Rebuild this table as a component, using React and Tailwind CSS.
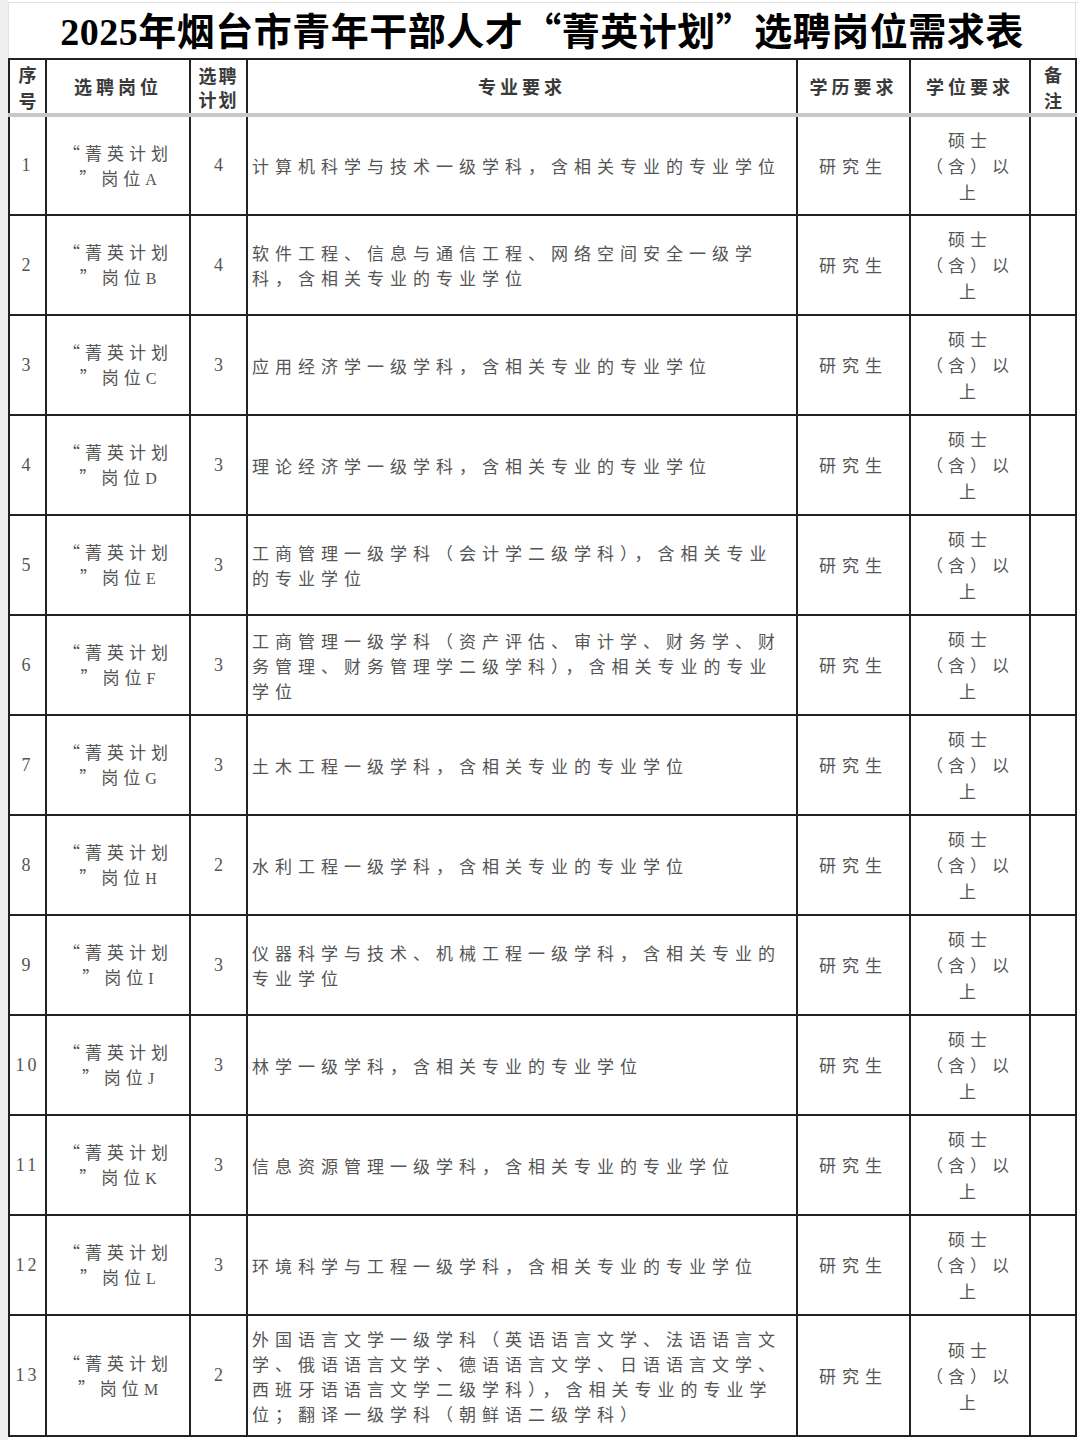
import React from "react";

const CJK = { fontFamily: '"Noto Sans CJK SC", "Liberation Sans", sans-serif' };
const SERIF = { fontFamily: '"Liberation Serif", "Noto Sans CJK SC", serif' };

// 岗位数据
const rows = [
  { n: 1, pos: "A", plan: 4, major: ["计算机科学与技术一级学科，含相关专业的专业学位"] },
  { n: 2, pos: "B", plan: 4, major: ["软件工程、信息与通信工程、网络空间安全一级学", "科，含相关专业的专业学位"] },
  { n: 3, pos: "C", plan: 3, major: ["应用经济学一级学科，含相关专业的专业学位"] },
  { n: 4, pos: "D", plan: 3, major: ["理论经济学一级学科，含相关专业的专业学位"] },
  { n: 5, pos: "E", plan: 3, major: ["工商管理一级学科（会计学二级学科），含相关专业", "的专业学位"] },
  {
    n: 6,
    pos: "F",
    plan: 3,
    major: ["工商管理一级学科（资产评估、审计学、财务学、财", "务管理、财务管理学二级学科），含相关专业的专业", "学位"],
  },
  { n: 7, pos: "G", plan: 3, major: ["土木工程一级学科，含相关专业的专业学位"] },
  { n: 8, pos: "H", plan: 2, major: ["水利工程一级学科，含相关专业的专业学位"] },
  { n: 9, pos: "I", plan: 3, major: ["仪器科学与技术、机械工程一级学科，含相关专业的", "专业学位"] },
  { n: 10, pos: "J", plan: 3, major: ["林学一级学科，含相关专业的专业学位"] },
  { n: 11, pos: "K", plan: 3, major: ["信息资源管理一级学科，含相关专业的专业学位"] },
  { n: 12, pos: "L", plan: 3, major: ["环境科学与工程一级学科，含相关专业的专业学位"] },
  {
    n: 13,
    pos: "M",
    plan: 2,
    tall: true,
    major: [
      "外国语言文学一级学科（英语语言文学、法语语言文",
      "学、俄语语言文学、德语语言文学、日语语言文学、",
      "西班牙语语言文学二级学科），含相关专业的专业学",
      "位；翻译一级学科（朝鲜语二级学科）",
    ],
  },
];

const cell = "border-2 border-[#222] align-middle p-0";
const head = cell + " border-b-[4px] border-b-[#c8c8c8]";

function Row({ r }) {
  return (
    <tr className={r.tall ? "h-[121px]" : "h-[100px]"}>
      <td className={cell + " text-center text-[18px] tracking-[3px] text-[#555]"} style={SERIF}>
        {r.n}
      </td>
      <td className={cell + " text-center text-[17px] leading-[25px] tracking-[5px] text-[#555]"} style={CJK}>
        <div>“菁英计划</div>
        <div>
          ”岗位<span style={SERIF} className="tracking-normal text-[16px]">{r.pos}</span>
        </div>
      </td>
      <td className={cell + " text-center text-[18px] text-[#555]"} style={SERIF}>
        {r.plan}
      </td>
      <td className={cell + " pl-[4px] text-[17px] leading-[25px] tracking-[6px] text-[#555] whitespace-nowrap"} style={CJK}>
        {r.major.map((l, i) => (
          <div key={i}>{l}</div>
        ))}
      </td>
      <td className={cell + " text-center text-[17px] tracking-[6px] text-[#555]"} style={CJK}>
        研究生
      </td>
      <td className={cell + " text-center text-[17px] leading-[26px] tracking-[5px] text-[#555]"} style={CJK}>
        <div>硕士</div>
        <div>（含）以</div>
        <div>上</div>
      </td>
      <td className={cell}></td>
    </tr>
  );
}

export default function App() {
  return (
    <div className="flex w-[1080px] h-[1440px] bg-white overflow-hidden">
      <div className="w-[8px] shrink-0 bg-[#efefef]" />
      <div className="flex flex-col w-[1070px]">
        <div className="h-[3px] border-b border-[#e2e2e2]" />
        <div className="h-[55px] w-[1068px] flex items-center justify-center border-l border-r border-[#e2e2e2]">
          <span className="text-[38px] font-bold text-black tracking-[0.5px]" style={CJK}>
            <span style={SERIF}>2025</span>年烟台市青年干部人才“菁英计划”选聘岗位需求表
          </span>
        </div>
        <table className="table-fixed border-collapse w-[1069px]">
          <colgroup>
            <col className="w-[37px]" />
            <col className="w-[144px]" />
            <col className="w-[57px]" />
            <col className="w-[550px]" />
            <col className="w-[113px]" />
            <col className="w-[120px]" />
            <col className="w-[46px]" />
          </colgroup>
          <thead>
            <tr className="h-[56px] text-[#3a3a3a] font-bold text-[18px]" style={CJK}>
              <th className={head + " leading-[26px]"}>
                <div>序</div>
                <div>号</div>
              </th>
              <th className={head + " tracking-[4px]"}>选聘岗位</th>
              <th className={head + " leading-[24px] tracking-[2px]"}>
                <div>选聘</div>
                <div>计划</div>
              </th>
              <th className={head + " tracking-[4px]"}>专业要求</th>
              <th className={head + " tracking-[4px]"}>学历要求</th>
              <th className={head + " tracking-[4px]"}>学位要求</th>
              <th className={head + " leading-[26px]"}>
                <div>备</div>
                <div>注</div>
              </th>
            </tr>
          </thead>
          <tbody>
            {rows.map((r) => (
              <Row key={r.n} r={r} />
            ))}
          </tbody>
        </table>
      </div>
    </div>
  );
}
